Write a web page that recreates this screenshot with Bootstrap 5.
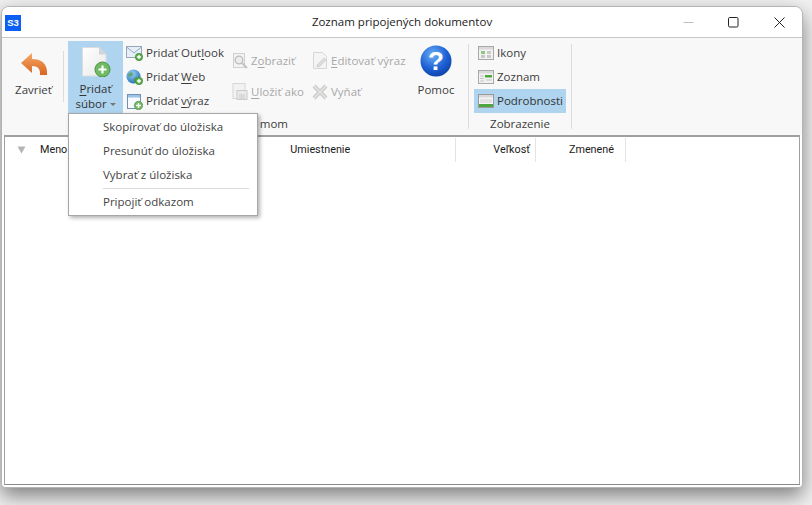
<!DOCTYPE html>
<html lang="sk">
<head>
<meta charset="utf-8">
<title>Zoznam pripojených dokumentov</title>
<link href="https://cdn.jsdelivr.net/npm/bootstrap@5.3.0/dist/css/bootstrap.min.css" rel="stylesheet">
<style>
html,body{height:100%;overflow:hidden}
body{background:#f1f1f1;font-family:"Open Sans","Noto Sans",sans-serif;font-size:11.5px;color:#3c3c3c;line-height:16px}
.gdefs{position:absolute;width:0;height:0}
.win{width:802px;height:482px;margin:6px 0 0 1px;background:#fff;border:1px solid #b4b4b4;border-radius:8px 8px 4px 4px;box-shadow:0 8px 20px rgba(0,0,0,.48);overflow:hidden}
.tbar{height:31px;display:grid;grid-template-columns:1fr auto 1fr;align-items:center;border-bottom:1px solid #c6c6c6;background:#fff;color:#222}
.s3{width:16px;height:16px;margin-left:3px;margin-top:1px;background:#0b5ff2;color:#fff;font:bold 9.5px/16px "Liberation Sans",sans-serif;text-align:center}
.ctl{width:45.5px;height:30px;display:flex;align-items:center;justify-content:center}
.ribbon{height:97px;background:#f8f8f8;display:flex;padding:3px 0 0 3px;color:#3c3c3c}
.grp{display:flex;flex-direction:column}
.tools{display:flex;height:75px}
.glabel{height:16px;margin-top:0;text-align:right;padding-right:170px}
.gview{text-align:center;padding:0}
.vsep{width:1px;background:#dcdcdc}
.sep1{height:51px;margin:10px 4px 0 1px}
.sep2{height:85px;margin:3px 5px 0 5px}
.sepa{margin-left:10px}
.big{display:flex;flex-direction:column;align-items:center;text-align:center}
.bclose{width:57px;padding-top:11px}
.bclose span{margin-top:6px}
.badd{width:55px;height:72px;background:#afd4ef;padding-top:6px;position:relative;line-height:15px}
.badd .blbl{margin-top:4px;color:#333}
.caret{display:inline-block;border:3px solid transparent;border-top-color:#777;border-bottom:0;margin-left:3px;vertical-align:2px}
.bhelp{width:44px;margin-left:4px;padding-top:4px}
.bhelp span{margin-top:5px}
.cols{display:flex;flex-direction:column}
.c1{width:102px;margin-left:3px}
.rw{height:24px;display:flex;align-items:center;gap:3px;white-space:nowrap}
.rw svg{flex:none}
.d1{width:76px;margin-left:4px;padding-top:4px}
.d2{width:98px;margin-left:4px;padding-top:4px}
.d1 .rw,.d2 .rw{height:31px;color:#a8a8a8}
.vcol{width:92px}
.vcol .rw{padding-left:4px;height:24px}
.vcol .on{background:#afd4ef;color:#333}
.vlist{height:350px;margin:0 2px;border:1px solid #a2a2a2;border-top-width:2px;border-color:#a0a0a0 #a0a0a0 #8b8b8b;background:#fff}
.lhead{display:flex;height:24px;margin-top:1px;color:#1a1a1a;font-family:Roboto,sans-serif;font-size:10.8px}
.lc{border-right:1px solid #e3e3e3;display:flex;align-items:center;height:24px}
.c-name{width:451px;border-right:1px solid #e3e3e3;padding-left:12px;position:relative}
.c-name .m1{margin-left:14px}
.c-name .m2{margin-left:223px}
.c-size{width:80px;justify-content:flex-end;padding-right:5px}
.c-date{width:90px;justify-content:flex-end;padding-right:11px}
.fmenu.dropdown-menu{display:block;position:absolute;top:100%;left:0;width:190px;min-width:0;height:103px;margin:0;padding:1px 0 0;border:1px solid #a6a6a6;border-radius:0;box-shadow:2px 2px 4px rgba(0,0,0,.3);font-size:11.5px;text-align:left;z-index:10}
.fmenu .dropdown-item{padding:0 0 0 34px;height:24px;line-height:24px;color:#444;font-size:11.5px}
.fmenu .dropdown-divider{margin:1px 8px 1px 34px;border-color:#dcdcdc}
u{text-underline-offset:2px;text-decoration-thickness:1px}
</style>
</head>
<body>
<svg class="gdefs" aria-hidden="true"><defs>
<linearGradient id="gOr" x1="0" y1="0" x2="0" y2="1"><stop offset="0" stop-color="#f7a868"/><stop offset="1" stop-color="#d8661f"/></linearGradient>
<linearGradient id="gPg" x1="0" y1="0" x2="1" y2="1"><stop offset="0" stop-color="#fff"/><stop offset="1" stop-color="#e8e8e8"/></linearGradient>
<radialGradient id="gBl" cx=".4" cy=".3" r=".8"><stop offset="0" stop-color="#6fb0f5"/><stop offset=".55" stop-color="#1f63d6"/><stop offset="1" stop-color="#0c3a9e"/></radialGradient>
<radialGradient id="gGl" cx=".4" cy=".3" r=".8"><stop offset="0" stop-color="#9fd4f5"/><stop offset="1" stop-color="#1667b5"/></radialGradient>
</defs></svg>
<div class="win">
  <div class="tbar">
    <div><div class="s3">S3</div></div>
    <div>Zoznam pripojených dokumentov</div>
    <div class="d-flex justify-content-end">
      <div class="ctl"><svg width="11" height="11"><path d="M0.5 5.5H10.5" stroke="#bdbdbd"/></svg></div>
      <div class="ctl"><svg width="11" height="11"><rect x=".5" y=".5" width="9.5" height="9.5" rx="1.2" fill="none" stroke="#222"/></svg></div>
      <div class="ctl"><svg width="11" height="11"><path d="M.5 .5L10.5 10.5M10.5 .5L.5 10.5" stroke="#222"/></svg></div>
    </div>
  </div>
  <div class="ribbon">
    <div class="grp">
      <div class="tools">
        <div class="big bclose">
          <svg width="28" height="24" viewBox="0 0 28 24"><path d="M1 11L12 1V7C21 7 28 11 27 23H20C20.500 17 18 14 12 14V21Z" fill="url(#gOr)"/></svg>
          <span>Zavrieť</span>
        </div>
        <div class="vsep sep1"></div>
        <div class="big badd">
          <svg width="30" height="30" viewBox="0 0 30 30"><path d="M1.500 .5H18L25 7.500V29H1.500Z" fill="url(#gPg)" stroke="#dcdcdc"/><path d="M18 .5V7.500H25Z" fill="#d4d4d4"/><circle cx="21.500" cy="22.500" r="7.500" fill="#6fbb61" stroke="#4c8f45" stroke-width="1"/><path d="M21.500 18.500V26.500M17.500 22.500H25.500" stroke="#fff" stroke-width="2.200"/></svg>
          <div class="blbl"><u>P</u>ridať<br>súbor<i class="caret"></i></div>
          <div class="dropdown-menu fmenu">
            <a class="dropdown-item" href="#">Skopírovať do úložiska</a>
            <a class="dropdown-item" href="#">Presunúť do úložiska</a>
            <a class="dropdown-item" href="#">Vybrať z úložiska</a>
            <hr class="dropdown-divider">
            <a class="dropdown-item" href="#">Pripojiť odkazom</a>
          </div>
        </div>
        <div class="cols c1">
          <div class="rw"><svg width="17" height="16" viewBox="0 0 17 16"><rect x=".5" y="1.500" width="15" height="11" fill="#e6eff8" stroke="#93a8bf"/><path d="M.5 2L8 8L15.500 2" fill="none" stroke="#93a8bf"/><circle cx="13" cy="12" r="3.700" fill="#5fae4e" stroke="#3c7f30" stroke-width=".6"/><path d="M13 10V14M11 12H15" stroke="#fff" stroke-width="1.300"/></svg><span>Pridať <span>Out<u>l</u>ook</span></span></div>
          <div class="rw"><svg width="17" height="16" viewBox="0 0 17 16"><circle cx="7.500" cy="7.500" r="7" fill="url(#gGl)"/><path d="M3 4C6 2 8 4 7 6S3 8 2 7ZM8 9C11 8 12 10 10 13S7 12 8 9Z" fill="#4f9a46" opacity=".7"/><circle cx="13" cy="12" r="3.700" fill="#5fae4e" stroke="#3c7f30" stroke-width=".6"/><path d="M13 10V14M11 12H15" stroke="#fff" stroke-width="1.300"/></svg><span>Pridať <u>W</u>eb</span></div>
          <div class="rw"><svg width="17" height="17" viewBox="0 0 17 17"><rect x="1.500" y="1.500" width="13" height="14" fill="#f7fbff" stroke="#6f93b8"/><rect x="2" y="2" width="12" height="2.500" fill="#9cc2e4"/><circle cx="12.500" cy="12.500" r="4.200" fill="#6fb661" stroke="#4c8f45" stroke-width=".6"/><path d="M12.500 10V15M10 12.500H15" stroke="#fff" stroke-width="1.400"/></svg><span>Pridať <u>v</u>ýraz</span></div>
        </div>
        <div class="cols d1">
          <div class="rw"><svg width="16" height="16" viewBox="0 0 16 16"><rect x="1.500" y=".5" width="11" height="14" fill="#f3f3f3" stroke="#d0d0d0"/><circle cx="7" cy="7" r="3.800" fill="#ececec" stroke="#bdbdbd" stroke-width="1.300"/><path d="M10 10L15 15" stroke="#c2c2c2" stroke-width="2"/></svg><span>Z<u>o</u>braziť</span></div>
          <div class="rw"><svg width="16" height="17" viewBox="0 0 16 17"><rect x="1" y=".5" width="12" height="15" fill="#f2f2f2" stroke="#d6d6d6"/><rect x="5" y="7.500" width="10" height="9" fill="#eaeaea" stroke="#cacaca"/><rect x="7" y="11" width="6" height="5" fill="#d9d9d9"/></svg><span><u>U</u>ložiť ako</span></div>
        </div>
        <div class="cols d2">
          <div class="rw"><svg width="16" height="17" viewBox="0 0 16 17"><path d="M1.500 .5H10.500L14.500 4.500V16.500H1.500Z" fill="#f4f4f4" stroke="#d6d6d6"/><path d="M5 13L12 6L14 8L7 15H5Z" fill="#dcdcdc" stroke="#c8c8c8" stroke-width=".6"/></svg><span><u>E</u>ditovať výraz</span></div>
          <div class="rw"><svg width="16" height="16" viewBox="0 0 16 16"><path d="M2 2L14 14M14 2L2 14" stroke="#c9c9c9" stroke-width="4"/><path d="M2 2L14 14M14 2L2 14" stroke="#e6e6e6" stroke-width="1.500"/></svg><span>Vyňať</span></div>
        </div>
        <div class="big bhelp">
          <svg width="32" height="32" viewBox="0 0 32 32"><circle cx="16" cy="16" r="15.500" fill="url(#gBl)"/><text x="16" y="25" text-anchor="middle" font-family="Liberation Sans,sans-serif" font-weight="700" font-size="26" fill="#fff">?</text></svg>
          <span>Pomoc</span>
        </div>
      </div>
      <div class="glabel">mom</div>
    </div>
    <div class="vsep sep2 sepa"></div>
    <div class="grp">
      <div class="tools">
        <div class="cols vcol">
          <div class="rw"><svg width="16" height="14" viewBox="0 0 16 14"><rect x=".5" y=".5" width="15" height="13" fill="#f2f2f2" stroke="#a8a8a8"/><rect x="1" y="1" width="14" height="2.500" fill="#d9d9d9"/><rect x="3" y="5" width="4" height="3" fill="#8fc77f"/><rect x="9" y="5" width="4" height="3" fill="#c9c9c9"/><rect x="3" y="9" width="4" height="3" fill="#c9c9c9"/><rect x="9" y="9" width="4" height="3" fill="#c9c9c9"/></svg><span>Ikony</span></div>
          <div class="rw"><svg width="16" height="14" viewBox="0 0 16 14"><rect x=".5" y=".5" width="15" height="13" fill="#f2f2f2" stroke="#a8a8a8"/><rect x="1" y="1" width="14" height="2.500" fill="#d9d9d9"/><rect x="7" y="5" width="7" height="2.500" fill="#4fa63f"/><path d="M2 6H6M2 8.500H6M2 11H6M8 10H14" stroke="#c4c4c4"/></svg><span>Zoznam</span></div>
          <div class="rw on"><svg width="16" height="14" viewBox="0 0 16 14"><rect x=".5" y=".5" width="15" height="13" fill="#f5f5f5" stroke="#9a9a9a"/><rect x="1" y="1" width="14" height="2.500" fill="#d9d9d9"/><path d="M2 6H14M2 8H14" stroke="#cfcfcf"/><rect x="1" y="10" width="14" height="3" fill="#4fa63f"/></svg><span>Podrobnosti</span></div>
        </div>
      </div>
      <div class="glabel gview">Zobrazenie</div>
    </div>
    <div class="vsep sep2"></div>
  </div>
  <div class="vlist">
    <div class="lhead">
      <div class="lc c-name"><svg width="9" height="8" viewBox="0 0 9 8"><path d="M.5 .5H8.500L4.500 7.500Z" fill="#b5b5b5"/></svg><span class="m1">Meno</span><span class="m2">Umiestnenie</span></div>
      <div class="lc c-size">Veľkosť</div>
      <div class="lc c-date">Zmenené</div>
    </div>
  </div>
</div>
</body>
</html>
